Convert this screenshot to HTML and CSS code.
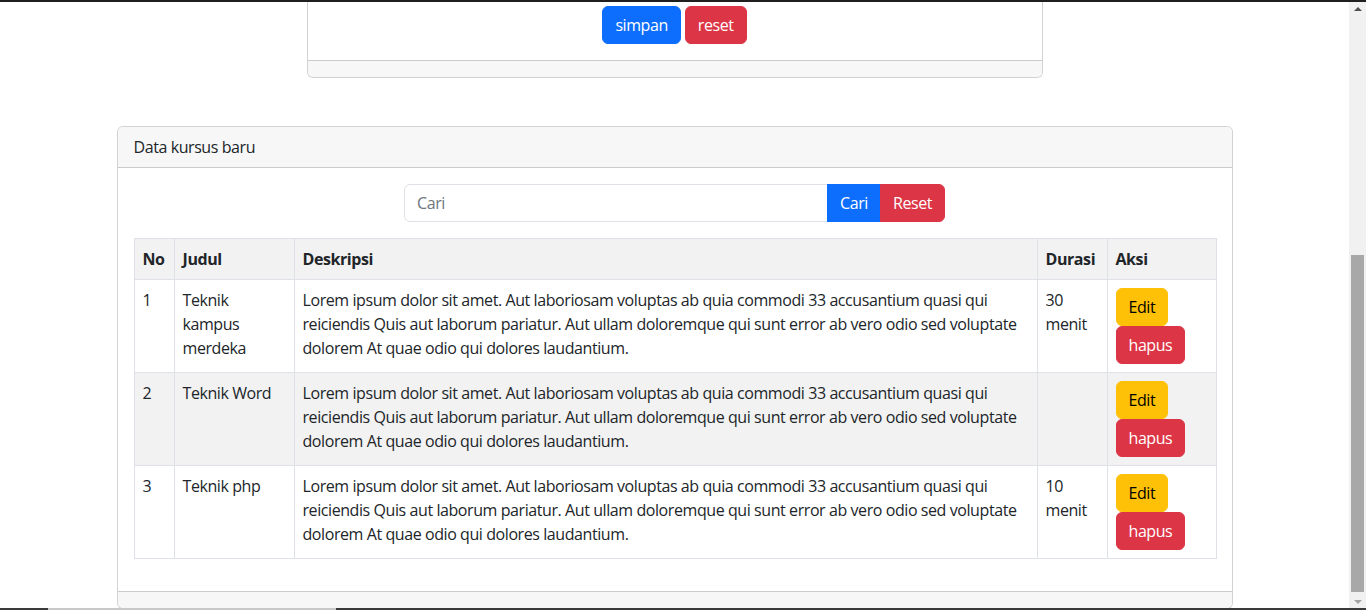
FILE: index.html
```html
<!DOCTYPE html>
<html lang="id">
<head>
<meta charset="utf-8">
<title>Data kursus</title>
<link rel="stylesheet" href="styles.css">
</head>
<body>
<div class="frame">
  <div class="viewport">
    <div class="page">
      <div class="container">
        <div class="card top-card">
          <div class="card-body">
            <div class="top-actions">
              <button class="btn btn-primary" type="submit">simpan</button>
              <button class="btn btn-danger" type="reset">reset</button>
            </div>
          </div>
          <div class="card-footer"></div>
        </div>
      </div>

      <div class="container">
        <div class="card main-card">
          <div class="card-header">Data kursus baru</div>
          <div class="card-body">
            <form class="search">
              <input class="search-input" type="text" placeholder="Cari">
              <button class="btn btn-primary btn-flat" type="submit">Cari</button>
              <button class="btn btn-danger btn-end" type="reset">Reset</button>
            </form>
            <table class="table">
              <colgroup>
                <col class="c-no">
                <col class="c-judul">
                <col class="c-desk">
                <col class="c-durasi">
                <col class="c-aksi">
              </colgroup>
              <tbody>
                <tr class="stripe">
                  <th>No</th>
                  <th>Judul</th>
                  <th>Deskripsi</th>
                  <th>Durasi</th>
                  <th>Aksi</th>
                </tr>
                <tr>
                  <td>1</td>
                  <td>Teknik kampus merdeka</td>
                  <td>Lorem ipsum dolor sit amet. Aut laboriosam voluptas ab quia commodi 33 accusantium quasi qui reiciendis Quis aut laborum pariatur. Aut ullam doloremque qui sunt error ab vero odio sed voluptate dolorem At quae odio qui dolores laudantium.</td>
                  <td>30 menit</td>
                  <td><a class="btn btn-warning" href="#">Edit</a> <a class="btn btn-danger" href="#">hapus</a></td>
                </tr>
                <tr class="stripe">
                  <td>2</td>
                  <td>Teknik Word</td>
                  <td>Lorem ipsum dolor sit amet. Aut laboriosam voluptas ab quia commodi 33 accusantium quasi qui reiciendis Quis aut laborum pariatur. Aut ullam doloremque qui sunt error ab vero odio sed voluptate dolorem At quae odio qui dolores laudantium.</td>
                  <td></td>
                  <td><a class="btn btn-warning" href="#">Edit</a> <a class="btn btn-danger" href="#">hapus</a></td>
                </tr>
                <tr>
                  <td>3</td>
                  <td>Teknik php</td>
                  <td>Lorem ipsum dolor sit amet. Aut laboriosam voluptas ab quia commodi 33 accusantium quasi qui reiciendis Quis aut laborum pariatur. Aut ullam doloremque qui sunt error ab vero odio sed voluptate dolorem At quae odio qui dolores laudantium.</td>
                  <td>10 menit</td>
                  <td><a class="btn btn-warning" href="#">Edit</a> <a class="btn btn-danger" href="#">hapus</a></td>
                </tr>
              </tbody>
            </table>
          </div>
          <div class="card-footer"></div>
        </div>
      </div>
    </div>
  </div>
  <div class="scrollbar">
    <div class="sb-btn"><span class="arrow-up"></span></div>
    <div class="sb-track"><div class="sb-thumb"></div></div>
    <div class="sb-btn"><span class="arrow-down"></span></div>
  </div>
</div>
<div class="edge-top"></div>
<div class="edge-bottom">
  <span class="seg-dark seg-a"></span>
  <span class="seg-light"></span>
  <span class="seg-dark seg-b"></span>
</div>
</body>
</html>
```
FILE: styles.css
```css
* { box-sizing: border-box; }

html, body {
  margin: 0;
  padding: 0;
}

body {
  font-family: "Segoe UI", "Open Sans", "Noto Sans", sans-serif;
  font-size: 16px;
  line-height: 1.5;
  color: #212529;
  background: #fff;
  letter-spacing: -0.42px;
  overflow: hidden;
}

.frame {
  display: flex;
  height: 610px;
  overflow: hidden;
}

.viewport {
  flex: 1;
  overflow: hidden;
}

.page {
  margin-top: -11px;
}

.container {
  width: 1140px;
  margin: 0 auto;
  padding: 0 12px;
}

.card {
  background: #fff;
  border: 1px solid rgba(0, 0, 0, 0.175);
  border-radius: 6px;
}

.top-card {
  width: 736px;
  margin-left: 190px;
}

.main-card {
  margin-top: 48px;
}

.card-header {
  padding: 8px 16px;
  background: #f7f7f7;
  border-bottom: 1px solid rgba(0, 0, 0, 0.175);
  border-radius: 5px 5px 0 0;
}

.card-body {
  padding: 16px;
}

.card-footer {
  padding: 8px 16px;
  background: #f7f7f7;
  border-top: 1px solid rgba(0, 0, 0, 0.175);
  border-radius: 0 0 5px 5px;
}

.top-actions {
  display: flex;
  justify-content: center;
  gap: 4px;
}

.btn {
  display: inline-block;
  padding: 6px 12px;
  font-family: inherit;
  font-size: 16px;
  line-height: 1.5;
  letter-spacing: inherit;
  border: 1px solid transparent;
  border-radius: 6px;
  text-decoration: none;
  cursor: pointer;
  vertical-align: middle;
}

.btn-primary {
  background: #0d6efd;
  border-color: #0d6efd;
  color: #fff;
}

.btn-danger {
  background: #dc3545;
  border-color: #dc3545;
  color: #fff;
}

.btn-warning {
  background: #ffc107;
  border-color: #ffc107;
  color: #000;
}

.search {
  display: flex;
  width: 50%;
  margin: 0 auto;
}

.search-input {
  flex: 1;
  min-width: 0;
  padding: 6px 12px;
  font-family: inherit;
  font-size: 16px;
  line-height: 1.5;
  letter-spacing: inherit;
  color: #212529;
  border: 1px solid #dee2e6;
  border-radius: 6px 0 0 6px;
  outline: none;
}

.search-input::placeholder {
  color: #6c757d;
}

.btn-flat {
  border-radius: 0;
  margin-left: -1px;
}

.btn-end {
  border-radius: 0 6px 6px 0;
  margin-left: -1px;
}

.table {
  width: 100%;
  margin: 16px 0 16px;
  border-collapse: collapse;
  table-layout: fixed;
  vertical-align: top;
}

.c-no { width: 40px; }
.c-judul { width: 120px; }
.c-desk { width: 743px; }
.c-durasi { width: 70px; }
.c-aksi { width: 109px; }

.table th,
.table td {
  padding: 8px;
  border: 1px solid #dee2e6;
  text-align: left;
  vertical-align: top;
}

.table th {
  font-weight: 700;
}

.stripe {
  background: #f2f2f2;
}

.scrollbar {
  width: 17px;
  flex-shrink: 0;
  background: #f1f1f1;
  display: flex;
  flex-direction: column;
}

.sb-btn {
  height: 17px;
  display: flex;
  align-items: center;
  justify-content: center;
}

.arrow-up {
  width: 0;
  height: 0;
  border-left: 4px solid transparent;
  border-right: 4px solid transparent;
  border-bottom: 4px solid #505050;
}

.arrow-down {
  width: 0;
  height: 0;
  border-left: 4px solid transparent;
  border-right: 4px solid transparent;
  border-top: 4px solid #a3a3a3;
}

.sb-track {
  flex: 1;
  padding: 238px 2px 1px;
}

.sb-thumb {
  height: 100%;
  background: #a8a8a8;
}

.edge-top {
  position: fixed;
  top: 0;
  left: 0;
  right: 0;
  height: 2px;
  background: #1f1f1f;
}

.edge-bottom {
  position: fixed;
  left: 0;
  right: 0;
  bottom: 0;
  height: 2px;
  display: flex;
}

.seg-dark {
  background: #3a3a3a;
}

.seg-a {
  width: 48px;
}

.seg-light {
  width: 288px;
  background: #c8c8c8;
}

.seg-b {
  flex: 1;
}
```
